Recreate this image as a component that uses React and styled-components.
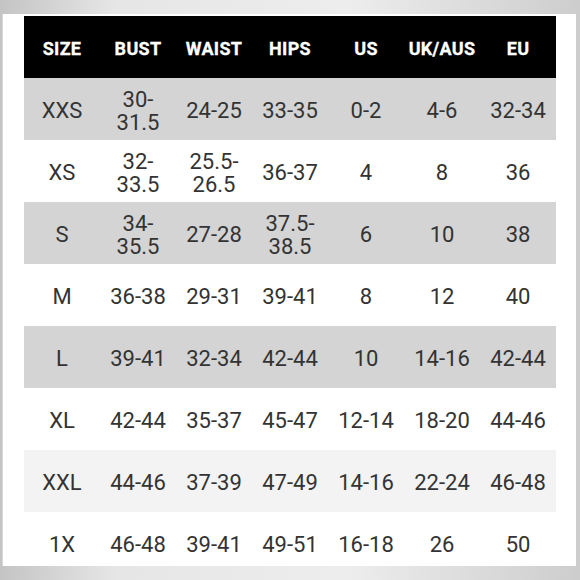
import React from "react";
import styled, { createGlobalStyle } from "styled-components";

const Global = createGlobalStyle`
  html, body { margin: 0; padding: 0; background: #cfcfcf; }
  body { font-family: Roboto, "Liberation Sans", sans-serif; }
`;

const Frame = styled.div`
  width: 580px;
  height: 580px;
  box-sizing: border-box;
  padding: 14px 4px 14px 2px;
  background:
    linear-gradient(90deg, #c4c4c4 0%, #e6e6e6 20%, #ededed 60%, #cdcdcd 100%);
  display: flex;
`;

const Panel = styled.div`
  flex: 1;
  background: #ffffff;
  border-left: 1px solid #d8d8d8;
  overflow: hidden;
  padding: 2px 20px 0 21px;
`;

const Table = styled.div`
  display: grid;
  grid-template-columns: repeat(7, 76px);
  grid-auto-rows: 62px;
  width: 532px;
`;

const Row = styled.div`
  display: contents;
`;

const HeadCell = styled.div`
  background: #000;
  color: #fff;
  font-family: Roboto, "Liberation Sans", sans-serif;
  font-weight: 700;
  font-size: 18px;
  letter-spacing: 0.3px;
  display: flex;
  align-items: center;
  justify-content: center;
  padding-top: 2px;
  -webkit-text-stroke: 0.3px #fff;
`;

const Cell = styled.div`
  background: ${(p) => p.$bg};
  color: #333;
  font-family: Roboto, "Liberation Sans", sans-serif;
  font-size: 22px;
  line-height: 23px;
  display: flex;
  align-items: center;
  justify-content: center;
  text-align: center;
  white-space: pre-line;
  padding-top: 3px;
`;

const headers = ["SIZE", "BUST", "WAIST", "HIPS", "US", "UK/AUS", "EU"];

const rows = [
  { bg: "#d4d4d4", cells: ["XXS", "30-\n31.5", "24-25", "33-35", "0-2", "4-6", "32-34"] },
  { bg: "#ffffff", cells: ["XS", "32-\n33.5", "25.5-\n26.5", "36-37", "4", "8", "36"] },
  { bg: "#d4d4d4", cells: ["S", "34-\n35.5", "27-28", "37.5-\n38.5", "6", "10", "38"] },
  { bg: "#ffffff", cells: ["M", "36-38", "29-31", "39-41", "8", "12", "40"] },
  { bg: "#d4d4d4", cells: ["L", "39-41", "32-34", "42-44", "10", "14-16", "42-44"] },
  { bg: "#ffffff", cells: ["XL", "42-44", "35-37", "45-47", "12-14", "18-20", "44-46"] },
  { bg: "#f3f3f3", cells: ["XXL", "44-46", "37-39", "47-49", "14-16", "22-24", "46-48"] },
  { bg: "#ffffff", cells: ["1X", "46-48", "39-41", "49-51", "16-18", "26", "50"] },
];

export default function App() {
  return (
    <>
      <Global />
      <Frame>
        <Panel>
          <Table>
            <Row>
              {headers.map((h) => (
                <HeadCell key={h}>{h}</HeadCell>
              ))}
            </Row>
            {rows.map((r, i) => (
              <Row key={i}>
                {r.cells.map((c, j) => (
                  <Cell key={j} $bg={r.bg}>
                    {c}
                  </Cell>
                ))}
              </Row>
            ))}
          </Table>
        </Panel>
      </Frame>
    </>
  );
}
